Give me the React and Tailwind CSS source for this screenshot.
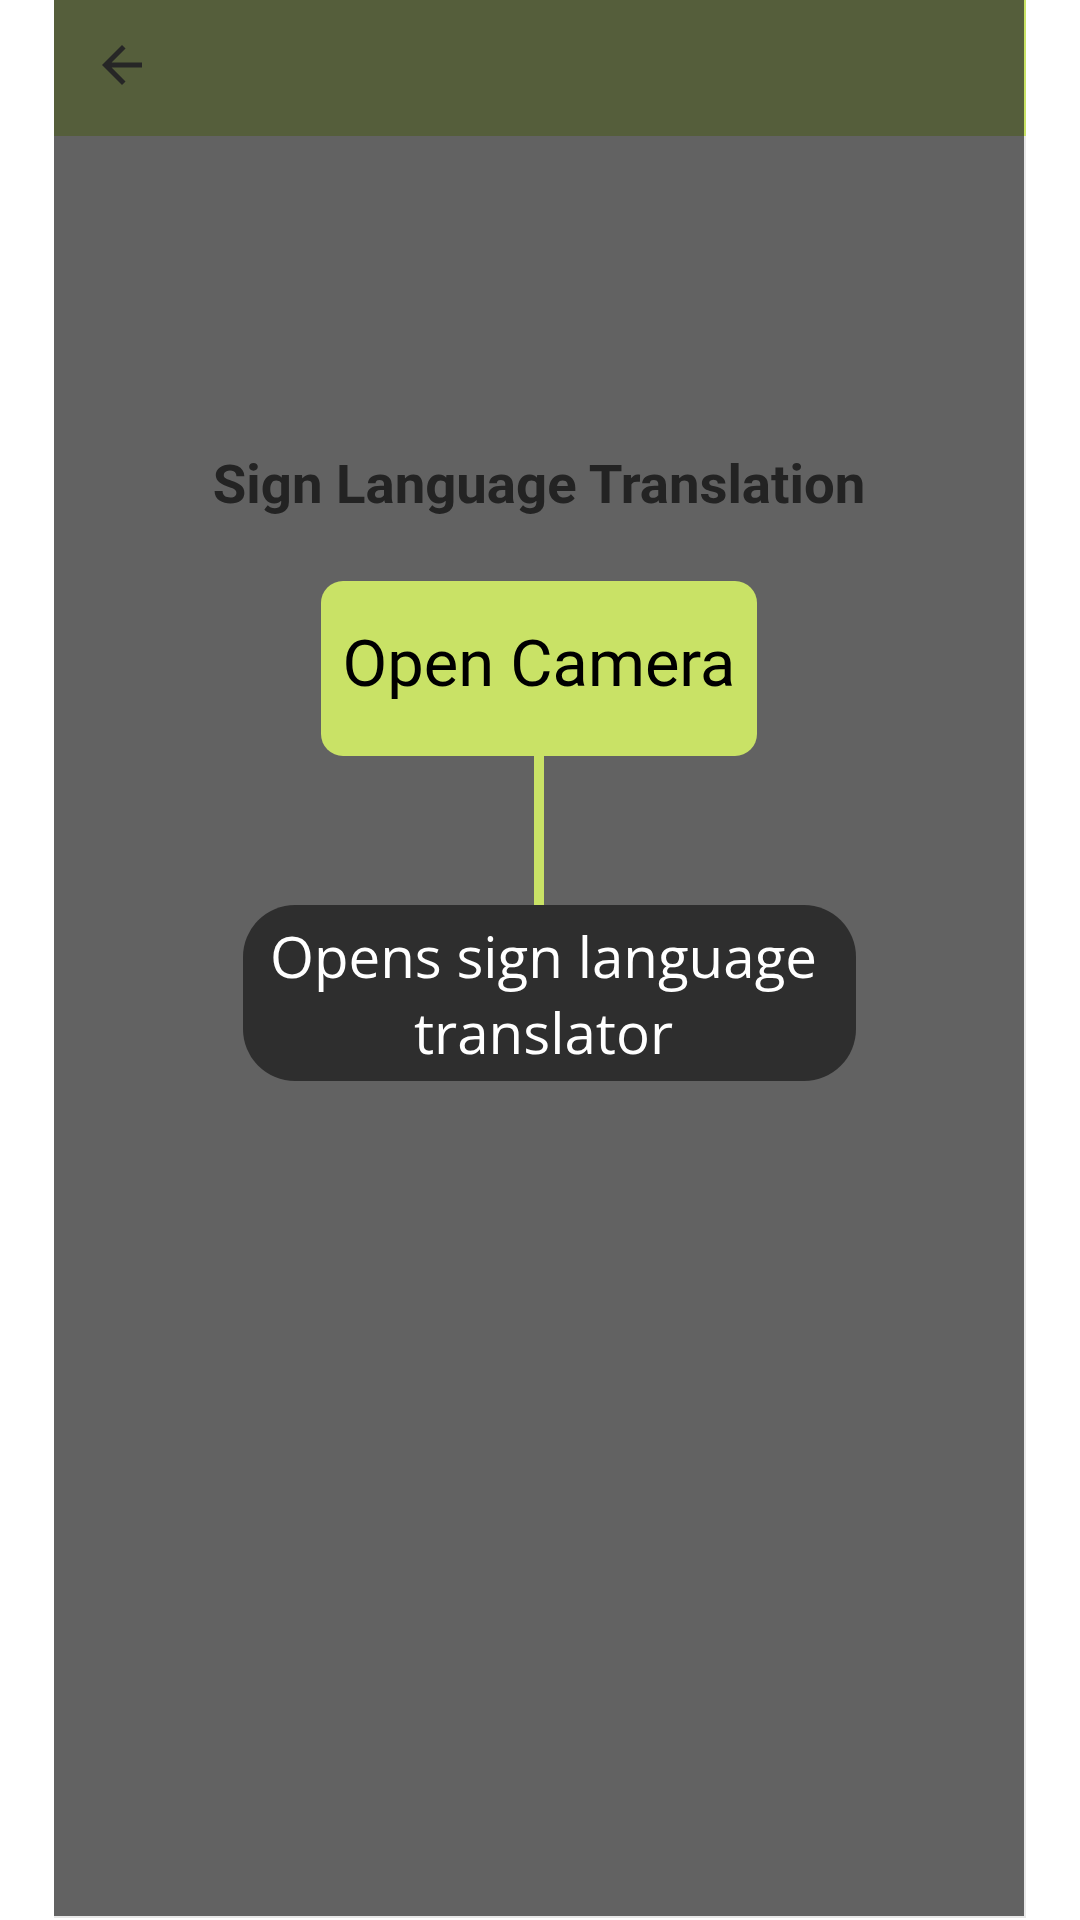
export default function App() {
    return (
        <div className="w-[1080px] h-[1920px] bg-white pl-[54px]">
            <div className="w-[972px] h-[1918px] flex flex-col">
                {/* Top bar */}
                <header className="h-[136px] bg-[#555e3b] border-r-2 border-[#c9e266] pt-[35px] pl-[38px]">
                    <svg width="60" height="60" viewBox="0 0 24 24" fill="#262626">
                        <path d="M20 11H7.83l5.59-5.59L12 4l-8 8 8 8 1.41-1.41L7.83 13H20v-2z" />
                    </svg>
                </header>

                {/* Body */}
                <main className="flex-1 bg-[#626262] border-r-2 border-b-2 border-[#e8e8e8] flex flex-col items-center pt-[321px]">
                    <h1 className="text-[54.5px] leading-none font-bold text-[#232323] font-['Roboto',sans-serif]">
                        Sign Language Translation
                    </h1>

                    <button className="mt-[69px] w-[436px] h-[175px] pb-[7px] rounded-[22px] bg-[#c9e266] flex items-center justify-center text-[65px] leading-none text-black font-['Roboto',sans-serif]">
                        Open Camera
                    </button>

                    <div className="w-[10px] h-[149px] bg-[#c9e266]"></div>

                    <div className="ml-[21px] w-[613px] h-[176px] rounded-[52px] bg-[#2e2e2e] flex items-center justify-center pt-[4px] pr-[12px]">
                        <p className="text-center text-white text-[56.5px] leading-[76px] font-['Open_Sans',sans-serif]">
                            Opens sign language
                            <br />
                            translator
                        </p>
                    </div>
                </main>
            </div>
        </div>
    );
}
